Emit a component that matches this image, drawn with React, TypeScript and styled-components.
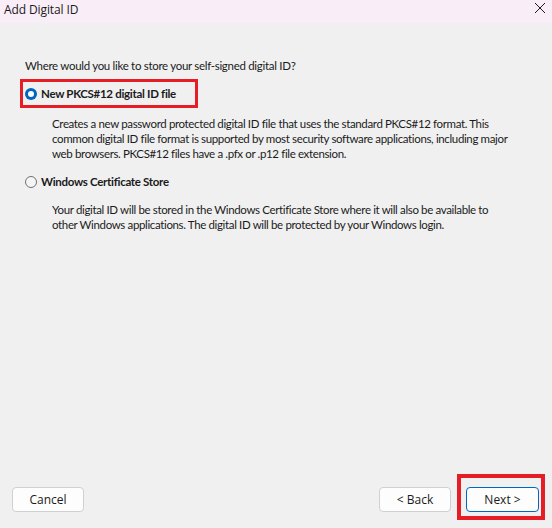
import React from "react";
import styled, { createGlobalStyle } from "styled-components";

const Global = createGlobalStyle`
  html, body { margin: 0; padding: 0; }
  body { width: 552px; height: 528px; overflow: hidden; background: #f0f0f0; }
  * { box-sizing: border-box; }
`;

const Window = styled.div`
  width: 552px;
  height: 528px;
  display: flex;
  flex-direction: column;
  background: #f0f0f0;
  color: #1b1b1b;
`;

const TitleBar = styled.div`
  height: 23px;
  flex: none;
  background: #f9eef7;
  display: flex;
  align-items: center;
  justify-content: space-between;
  padding: 0 6px 0 4px;
`;

const Title = styled.span`
  font-family: "Open Sans", "Noto Sans", sans-serif;
  font-size: 12px;
  letter-spacing: -0.1px;
  color: #1a1a1a;
  margin-top: -5px;
`;

const CloseButton = styled.span`
  width: 12px;
  height: 12px;
  display: flex;
  margin-top: -7px;
`;

const Body = styled.div`
  flex: 1;
  display: flex;
  flex-direction: column;
  padding: 35px 13px 16px 12px;
`;

const Content = styled.div`
  flex: 1;
  padding-left: 13px;
  font-family: "Lato", "Noto Sans", sans-serif;
  font-size: 11.5px;
  letter-spacing: -0.3px;
`;

const Question = styled.p`
  margin: 0 0 9px;
  line-height: 15px;
  white-space: nowrap;
`;

const OptionRow = styled.label<{ $highlight?: boolean }>`
  position: relative;
  display: flex;
  align-items: center;
  gap: 4px;
  width: 172px;
  height: 23px;
  margin-left: -2px;
  padding-left: 2px;
  font-weight: bold;
  letter-spacing: -0.3px;
  &::after {
    content: "";
    display: ${(p) => (p.$highlight ? "block" : "none")};
    position: absolute;
    inset: -3px;
    border: 3px solid #e51d25;
    pointer-events: none;
  }
`;

const Radio = styled.span<{ $checked?: boolean }>`
  width: 12px;
  height: 12px;
  border-radius: 50%;
  flex: none;
  background: ${(p) => (p.$checked ? "#0067c0" : "#f5f5f5")};
  border: ${(p) => (p.$checked ? "none" : "1px solid #707070")};
  display: flex;
  align-items: center;
  justify-content: center;
  &::before {
    content: "";
    display: ${(p) => (p.$checked ? "block" : "none")};
    width: 6px;
    height: 6px;
    border-radius: 50%;
    background: #ffffff;
  }
`;

const Description = styled.p<{ $before: number; $after?: number }>`
  margin: ${(p) => p.$before}px 0 ${(p) => p.$after ?? 0}px 27px;
  line-height: 15px;
  letter-spacing: -0.36px;
  white-space: nowrap;
`;

const Footer = styled.div`
  display: flex;
  align-items: center;
  gap: 15px;
`;

const Spacer = styled.div`
  flex: 1;
`;

const Button = styled.button<{ $primary?: boolean }>`
  width: ${(p) => (p.$primary ? 73 : 72)}px;
  height: 25px;
  background: #fdfdfd;
  border: 1px solid ${(p) => (p.$primary ? "#0067c0" : "#d0d0d0")};
  border-radius: 4px;
  font-family: "Open Sans", "Noto Sans", sans-serif;
  font-size: 12px;
  color: #1a1a1a;
  padding: 0;
  position: relative;
`;

const Highlight = styled.span`
  position: absolute;
  left: -10px;
  right: -7px;
  top: -14px;
  bottom: -9px;
  border: 4px solid #e51d25;
  pointer-events: none;
`;

export default function App() {
  return (
    <>
      <Global />
      <Window>
        <TitleBar>
          <Title>Add Digital ID</Title>
          <CloseButton>
            <svg width="12" height="12" viewBox="0 0 12 12">
              <path d="M1 1 L11 11 M11 1 L1 11" stroke="#1a1a1a" strokeWidth="1" fill="none" />
            </svg>
          </CloseButton>
        </TitleBar>
        <Body>
          <Content>
            <Question>Where would you like to store your self-signed digital ID?</Question>
            <OptionRow $highlight>
              <Radio $checked />
              New PKCS#12 digital ID file
            </OptionRow>
            <Description $before={11} $after={9}>
              Creates a new password protected digital ID file that uses the standard PKCS#12 format. This
              <br />
              common digital ID file format is supported by most security software applications, including major
              <br />
              web browsers. PKCS#12 files have a .pfx or .p12 file extension.
            </Description>
            <OptionRow>
              <Radio />
              Windows Certificate Store
            </OptionRow>
            <Description $before={9}>
              Your digital ID will be stored in the Windows Certificate Store where it will also be available to
              <br />
              other Windows applications. The digital ID will be protected by your Windows login.
            </Description>
          </Content>
          <Footer>
            <Button>Cancel</Button>
            <Spacer />
            <Button>&lt; Back</Button>
            <Button $primary>
              Next &gt;
              <Highlight />
            </Button>
          </Footer>
        </Body>
      </Window>
    </>
  );
}
